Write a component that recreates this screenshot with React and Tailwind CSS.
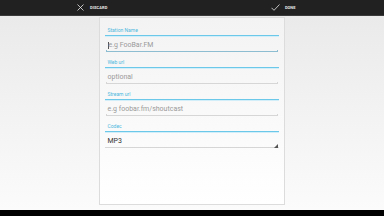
import React from "react";

const font = { fontFamily: '"Roboto", "Liberation Sans", sans-serif' };

function Label({ text }) {
  return (
    <div className="h-[16px] flex flex-col">
      <div className="flex-1 flex items-end pl-[3px] pb-[2px] text-[5px] leading-[5px] text-[#4cb8dd]">
        {text}
      </div>
      <div className="h-[1px] bg-[#6cc8e8]" />
      <div className="h-[1px] bg-[#d2eef8]" />
    </div>
  );
}

function Input({ text, focused }) {
  const line = focused ? "bg-[#8dbdd0]" : "bg-[#d6d6d6]";
  return (
    <div className="h-[16px] flex flex-col px-[1px]">
      <div className="flex-1 flex items-center pl-[2px] pt-[3px] text-[7px] leading-[7px] text-[#9a9a9a]">
        {focused && <span className="w-[0.5px] h-[7px] bg-[#555] mr-[0.5px]" />}
        {text}
      </div>
      <div className="relative h-[2px]">
        <div className={`absolute left-0 right-0 top-0 h-[1px] ${line}`} />
        <div className={`absolute left-0 bottom-[1px] w-[1px] h-[2px] ${line}`} />
        <div className={`absolute right-0 bottom-[1px] w-[1px] h-[2px] ${line}`} />
      </div>
    </div>
  );
}

function Spinner({ text }) {
  return (
    <div className="h-[16px] flex flex-col">
      <div className="flex-1 flex items-center pl-[3px] pt-[3px] text-[7px] leading-[7px] text-[#333333]">
        {text}
      </div>
      <div className="relative h-[2px]">
        <div className="absolute left-0 right-0 top-0 h-[1px] bg-[#d6d6d6]" />
        <svg className="absolute right-[1px] bottom-[1px]" width="4" height="4" viewBox="0 0 4 4">
          <polygon points="4,0 4,4 0,4" fill="#555" />
        </svg>
      </div>
    </div>
  );
}

export default function App() {
  return (
    <div className="w-[384px] h-[216px] flex flex-col overflow-hidden" style={font}>
      <div className="h-[16px] bg-[#212121] flex items-center text-[#e8e8e8] border-b border-[#3a3a3a]">
        <div className="flex-1 flex items-center pl-[77px]">
          <svg width="7" height="7" viewBox="0 0 7 7">
            <path d="M0.5 0.5 L6.5 6.5 M6.5 0.5 L0.5 6.5" stroke="#e8e8e8" strokeWidth="0.8" />
          </svg>
          <span className="ml-[6px] text-[4px] leading-[4px] font-bold tracking-[0.1px]">DISCARD</span>
        </div>
        <div className="flex-1 flex items-center pl-[81px]">
          <svg width="9" height="7" viewBox="0 0 9 7">
            <path d="M0.5 3.8 L3 6.3 L8.5 0.5" stroke="#e8e8e8" strokeWidth="0.8" fill="none" />
          </svg>
          <span className="ml-[5px] text-[4px] leading-[4px] font-bold">DONE</span>
        </div>
      </div>
      <div className="flex-1 flex justify-center bg-gradient-to-b from-[#eaeaea] to-[#fbfbfb]">
        <div className="w-[186px] h-[188px] mt-[1px] ml-[-1px] bg-gradient-to-b from-[#f3f3f3] to-[#ffffff] border border-[#dcdcdc] px-[5px] pt-[3px] flex flex-col">
          <Label text="Station Name" />
          <Input text="e.g FooBar.FM" focused />
          <Label text="Web url" />
          <Input text="optional" />
          <Label text="Stream url" />
          <Input text="e.g foobar.fm/shoutcast" />
          <Label text="Codec" />
          <Spinner text="MP3" />
        </div>
      </div>
      <div className="h-[6px] bg-black" />
    </div>
  );
}
